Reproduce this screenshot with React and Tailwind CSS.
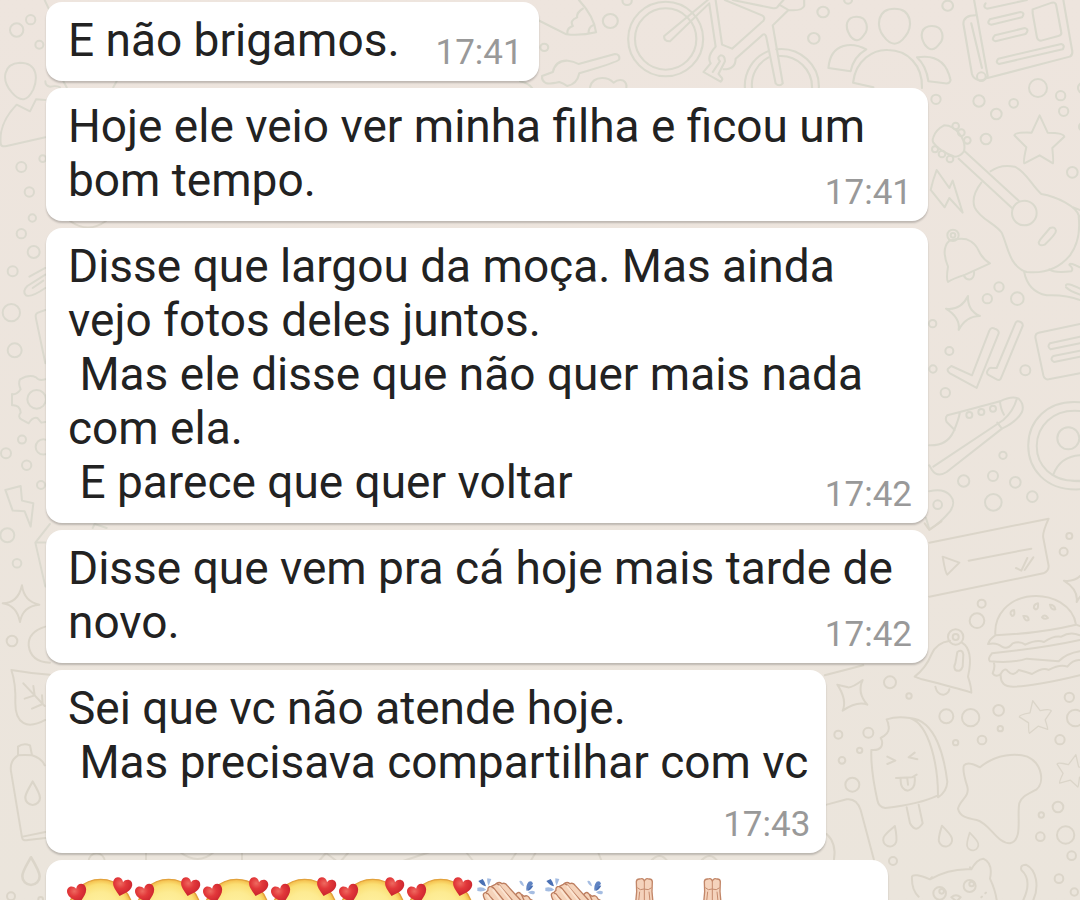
import clsx from "clsx";

const messages = [
  { text: "E não brigamos.", time: "17:41", layout: "inline" },
  {
    text: "Hoje ele veio ver minha filha e ficou um bom tempo.",
    time: "17:41",
    layout: "wide",
  },
  {
    text: "Disse que largou da moça. Mas ainda vejo fotos deles juntos.\n Mas ele disse que não quer mais nada com ela.\n E parece que quer voltar",
    time: "17:42",
    layout: "wide",
  },
  {
    text: "Disse que vem pra cá hoje mais tarde de novo.",
    time: "17:42",
    layout: "wide",
  },
  {
    text: "Sei que vc não atende hoje.\n Mas precisava compartilhar com vc",
    time: "17:43",
    layout: "stacked",
  },
];

const reactions = [
  "love",
  "love",
  "love",
  "love",
  "love",
  "love",
  "clap",
  "clap",
  "pray",
  "pray",
];

const STAR =
  "M0 -72 L24 -20 Q72 -20 74 -8 L38 26 Q42 70 40 72 L0 48 L-46 72 Q-50 68 -40 24 L-76 -12 Q-74 -22 -24 -20Z";
const SPARK = "M14 -52 Q12 -8 50 8 Q8 8 -14 50 Q-8 14 -52 -14 Q-8 -8 14 -52Z";
const DROP = "M0 -34 C12 -14 20 0 20 10 A20 20 0 0 1 -20 10 C-20 -2 -10 -16 0 -34Z";

function Dots({ points }) {
  return points.map(([x, y, r]) => <circle key={`${x}-${y}`} cx={x} cy={y} r={r} />);
}

function Wallpaper() {
  return (
    <svg
      aria-hidden="true"
      viewBox="0 0 1080 900"
      preserveAspectRatio="xMidYMin slice"
      className="absolute inset-0 h-full w-full"
      fill="none"
      strokeWidth="6"
      strokeLinecap="round"
      strokeLinejoin="round"
    >
      {/* pencil, bicycle, people, newspaper */}
      <g transform="translate(520 0) scale(.357 .3333)" stroke="#dad9cd">
        <path d="M50 60 L130 103 Q170 108 213 97 Q208 50 165 0 M176 26 Q158 38 160 52 Q138 62 148 78 Q130 84 133 103 M192 98 Q192 82 204 76" />
        <ellipse cx="408" cy="117" rx="105" ry="112" />
        <ellipse cx="408" cy="117" rx="86" ry="92" />
        <path d="M526 0 L404 108 Q402 124 420 124 L530 10 L548 140 Q522 170 534 190 Q520 208 514 216 L562 245 Q570 238 564 232 L556 222 L574 184 Q574 166 562 166 Q550 172 560 184 L540 216 M570 208 Q604 208 604 176 L680 104 Q688 100 690 112 L716 250 Q726 262 736 250 L708 76 L752 30 Q790 34 796 18 V0 M548 0 L566 134 L594 146 L682 62 Q688 52 678 46 L574 0 M596 0 L706 24 Q720 28 726 14 L738 0 M726 14 L752 30" />
        <path d="M630 265 A106 112 0 0 1 694 154 M718 148 A106 112 0 0 1 837 265 M650 265 A88 94 0 0 1 696 172 M724 168 A88 94 0 0 1 818 265" />
        <path d="M164 192 L266 162 Q280 162 278 178 Q276 186 166 220 Q160 252 132 258 Q122 250 110 246 Q84 252 74 250 Q60 244 62 228 L92 216 Q100 180 134 182 Q150 184 164 192Z M196 262 Q202 234 230 234 Q250 234 262 248 Q276 236 290 242 Q300 250 298 262 M0 244 Q24 250 34 264" />
        <path d="M1049 26 C1100 26 1100 84 1080 108 Q1049 154 1018 108 C998 84 998 26 1049 26Z M943 50 C976 50 976 90 964 104 Q944 136 924 106 C908 78 914 50 943 50Z M1154 78 C1188 78 1188 116 1176 130 Q1154 164 1134 134 C1118 106 1124 78 1154 78Z" />
        <path d="M933 248 C940 180 990 148 1030 150 C1086 150 1128 196 1126 264 M933 248 L990 262 M926 214 L864 204 Q868 150 906 138 Q936 128 970 148 Q934 170 926 214Z M1112 172 Q1190 158 1206 240 Q1204 252 1190 250 L1144 244 Q1138 198 1112 172Z" />
        <path d="M1272 0 L1310 228 Q1302 244 1284 240 Q1270 236 1266 222 L1242 72 Q1242 46 1276 46 M1264 70 L1294 204 M1310 234 L1540 170 Q1550 164 1546 148 L1522 0 M1436 28 L1490 8 Q1500 6 1502 16 L1516 96 Q1518 106 1508 108 L1460 122 Q1450 122 1448 112 L1436 40Z" />
        <path d="M1304 10 Q1296 22 1308 26 L1420 0 M1316 58 L1402 36 Q1416 38 1406 52 L1320 74 Q1306 72 1316 58Z M1330 106 L1414 84 Q1428 88 1416 102 L1332 124 Q1318 120 1330 106Z M1340 176 L1516 132 Q1528 136 1520 148 L1342 192 Q1330 188 1340 176Z" />
        <Dots points={[[253, 63, 21], [68, 142, 11], [300, 2, 13], [849, 36, 16], [823, 115, 16], [919, 0, 11], [1198, 17, 15]]} />
      </g>

      {/* guitar, bolt, bell */}
      <g transform="translate(900 80) scale(.3333)" stroke="#dad9cd">
        <path d="M100 172 Q106 150 132 136 Q160 136 180 164 Q198 188 192 214 Q180 230 164 230 Q118 214 100 188 Q96 180 100 172Z M194 214 L356 362 M176 236 L336 384 M272 274 Q300 252 344 260 C380 276 394 316 424 342 C470 350 530 378 538 410 M244 308 Q212 350 224 382 C240 418 290 432 306 460 C324 500 328 560 380 576 C440 582 480 562 510 526 Q544 480 536 410 M372 574 Q384 636 440 646 Q500 644 540 660 M448 568 Q460 580 514 574 Q522 566 508 554 Q510 546 540 562 M520 382 L540 390 M498 616 Q500 606 540 626 M498 622 Q510 634 540 644" />
        <circle cx="373" cy="399" r="37" />
        <path d="M420 480 L450 444 Q464 438 468 452 Q468 462 434 494 Q418 500 416 488Z" />
        <Dots points={[[167, 138, 10], [184, 158, 10], [202, 181, 10], [105, 208, 9], [126, 222, 10], [150, 237, 10], [159, 466, 17], [159, 466, 7]]} />
        <path d="M110 270 L148 324 L158 302 L188 398 L148 354 L134 382 L92 330 Q98 302 110 270Z" />
        <path d="M148 482 Q176 474 200 478 Q226 488 236 512 Q248 538 270 550 L196 584 Q158 596 144 606 Q138 598 144 560 Q122 506 148 482 M192 588 Q198 600 212 598 Q224 592 222 574" />
        <path transform="translate(419 178)" d={STAR} />
        <path transform="translate(190 700)" d={SPARK} />
        <Dots points={[[108, 58, 14], [237, 63, 17], [289, 102, 16], [341, 70, 13], [414, 24, 27], [482, 47, 14], [491, 94, 14], [550, 24, 16], [258, 177, 16], [517, 277, 16], [297, 621, 14], [262, 656, 14], [352, 656, 19], [549, 140, 12], [244, -10, 13]]} />
      </g>

      {/* ticks, card, shoe, contact */}
      <g transform="translate(900 300) scale(.3333)" stroke="#dad8cd">
        <path d="M154 198 L216 226 L268 92 Q274 80 284 86 Q298 90 296 100 L230 264 L150 220 Q140 214 144 206Z M290 204 L346 70 Q350 60 362 66 Q370 70 368 78 L304 232 Q300 244 290 238 L264 224 Q258 218 264 210 Q268 202 276 204Z" />
        <path d="M540 72 L416 98 Q406 100 406 112 L430 226 Q434 240 446 238 L540 220 M540 110 L450 130 Q440 140 452 148 L540 130 M540 152 L460 168 Q448 178 462 186 L540 170" />
        <path d="M88 436 Q140 438 160 396 Q176 360 180 336 L142 346 Q134 354 140 366 L164 390 M180 336 L300 304 Q336 286 356 296 Q374 314 366 336 Q350 366 306 386 L140 516 Q112 534 96 510 L88 496 M100 500 L310 360 Q340 334 350 298 M300 304 Q302 328 312 344 M292 368 L306 386" />
        <path d="M540 307 C336 290 330 580 540 568 M540 333 C370 318 364 556 540 542 M460 524 Q480 470 540 466 M466 530 Q492 544 540 544" />
        <circle cx="505" cy="415" r="33" />
        <path d="M88 574 C146 560 176 600 150 634 Q120 670 88 688 L78 654" />
        <Dots points={[[208, 345, 9], [244, 336, 9], [279, 326, 9], [98, 71, 11], [148, 153, 12], [99, 207, 11], [136, 278, 14], [376, 211, 15], [309, 466, 11], [279, 528, 15], [191, 543, 17], [346, 547, 16], [397, 590, 16], [280, 607, 25], [113, 614, 13]]} />
      </g>

      {/* voice note, bell, burger */}
      <g transform="translate(900 520) scale(.3333)" stroke="#dbd5c9">
        <path d="M88 68 L446 -4 Q426 40 430 54 L446 138 Q446 154 430 160 L88 230 M128 110 L178 128 L142 164 Q136 160 128 110Z M206 122 L394 86 M348 144 L364 152 L382 114 M374 150 L400 112 M74 10 L88 30 L124 4" />
        <path d="M150 362 Q108 368 94 404 Q78 444 44 470 L66 478 Q170 504 214 518 Q214 500 204 470 Q222 390 186 368 M106 500 Q112 526 132 524 Q146 520 148 508 M172 396 Q188 386 190 404 L188 440 Q182 458 166 450 Q160 440 166 430Z" />
        <circle cx="167" cy="351" r="23" />
        <circle cx="167" cy="351" r="9" />
        <path d="M286 344 C282 280 330 240 380 230 C460 218 520 260 528 314 L540 318 M286 346 Q420 340 528 314 M286 346 Q270 356 264 372 Q290 366 306 380 Q322 390 338 370 Q360 362 376 374 Q410 358 432 366 Q460 346 484 350 Q510 334 540 346 M276 400 Q430 384 540 360 M276 400 Q262 416 270 424 Q340 430 380 416 L476 424 Q500 400 540 394 M282 430 Q286 440 278 460 Q288 474 302 462 Q314 440 324 454 Q340 472 356 450 Q380 456 396 462 Q430 440 446 450 Q480 432 502 440 Q520 418 540 420 M302 464 Q300 500 340 500 Q400 500 540 466" />
        <path d="M332 282 Q330 272 342 270 Q346 288 336 288Z M370 288 Q386 286 386 300 Q376 306 370 288Z M402 264 Q400 254 414 250 Q416 270 406 268Z M450 254 Q464 254 466 268 Q454 272 450 254Z M426 292 Q434 280 444 294 Q434 300 426 292Z" />
        <path transform="translate(544 196)" d={SPARK} />
        <Dots points={[[245, 251, 12], [231, 302, 22], [508, 48, 9], [491, 95, 12]]} />
      </g>

      {/* ice lolly, splash, cat */}
      <g transform="translate(810 660) scale(.3333)" stroke="#dbd5c9">
        <path d="M44 46 L160 16" />
        <path d="M82 74 L114 82 Q126 84 158 60 Q140 98 172 134 Q142 122 98 152 Q112 120 82 74Z" />
        <path d="M230 178 Q260 168 300 174 C360 194 384 320 384 406 Q330 432 226 444 Q206 442 202 420 Q182 330 184 270 Q206 272 214 260 Q220 246 212 234 Q240 220 236 200 Q236 190 230 178Z M300 174 C380 180 404 300 412 366 Q410 396 384 412 M290 442 L300 490 Q318 522 338 490 L326 434" />
        <path d="M232 290 L256 302 L232 312 M314 278 L296 292 L322 298 M258 354 L306 352 L320 344 M272 356 Q270 390 294 392 Q318 386 314 352 M292 356 L294 374" />
        <path d="M462 316 Q474 302 510 322 C560 280 620 280 652 290 C700 312 702 370 680 388 C660 400 634 408 628 430 C620 470 640 540 600 550 C560 550 540 490 500 480 C470 474 450 470 444 446 C450 420 480 410 472 380 Q456 330 462 316Z" />
        <path transform="translate(243 530) rotate(20)" d={DROP} />
        <path transform="translate(404 530) rotate(-14)" d={DROP} />
        <path transform="translate(486 546) rotate(-14) scale(.85)" d={DROP} />
        <path transform="translate(678 168) scale(.65) rotate(-12)" d={STAR} />
        <path transform="translate(788 330) scale(.65) rotate(12)" d={STAR} />
        <path d="M50 434 L110 418 Q140 414 152 450 L192 600 M50 522 Q80 550 72 598" />
        <path d="M326 710 Q304 690 306 650 Q310 638 360 658 Q420 624 484 628 Q500 598 520 596 Q550 610 540 656 Q556 690 560 720 M484 628 L480 622 M360 658 L366 652 M424 712 Q438 700 452 712 L440 724Z M514 712 L516 710 M526 700 L528 698" />
        <path d="M634 630 Q630 614 648 614 C680 630 688 680 670 720 M634 630 Q668 660 640 720" />
        <Dots points={[[389, 700, 19], [395, 694, 7], [479, 678, 18], [485, 672, 7], [240, 67, 18], [297, 108, 8], [409, 169, 21], [482, 173, 26], [566, 151, 16], [571, 206, 8], [516, 240, 13], [437, 248, 8], [85, 224, 12], [175, 218, 15], [149, 271, 8], [96, 301, 10], [127, 374, 21], [249, 603, 12], [778, 112, 14], [796, 174, 25], [750, 239, 14], [744, 441, 16], [694, 465, 8], [691, 530, 13], [767, 525, 26], [785, 587, 13], [747, 656, 13], [793, 696, 11]]} />
      </g>

      {/* left edge */}
      <g transform="scale(.3333)" stroke="#dbd9ce">
        <path d="M60 188 C116 188 112 240 100 268 Q74 322 36 278 C2 240 10 190 60 188Z M136 300 L108 298 L90 334 L50 314 Q-4 370 2 430 Q2 442 20 438 L136 412 M134 0 L146 26 M136 244 Q136 258 150 260 Q170 256 180 262 M340 262 L350 244 M200 262 L190 244" />
        <path d="M136 804 L88 830 M136 824 L82 858 Q66 874 78 886 Q92 894 136 864 M130 842 L98 864" />
        <Dots points={[[92, 59, 14], [50, 90, 20], [118, 134, 12], [64, 501, 15], [88, 576, 14], [97, 654, 11], [64, 701, 14], [101, 756, 18], [38, 814, 15], [128, 476, 10]]} />
        <g transform="translate(0 900)">
          <path d="M136 30 L114 38 Q104 42 108 56 L136 190 M136 238 Q116 244 108 232 Q88 222 60 238 Q54 250 62 268 Q50 286 36 282 V316 Q60 314 62 338 Q52 350 64 358 L86 370 Q98 350 112 354 L124 368 L136 366" />
          <path d="M16 570 L62 558 L66 602 L100 610 L92 680 L74 634 L38 632Z M150 672 L106 728 L136 860 M106 728 H136 M278 684 L284 672 L320 684" />
          <Dots points={[[34, 38, 26], [44, 151, 21], [110, 298, 28], [66, 419, 12], [18, 460, 15], [80, 496, 14], [123, 555, 12], [22, 706, 21], [51, 790, 13], [130, 441, 23]]} />
        </g>
      </g>
      <g transform="translate(0 600) scale(.3333)" stroke="#dbd5c9">
        <path d="M8 10 Q54 10 66 -44 Q72 4 118 14 Q68 18 60 66 Q50 16 8 10Z M136 80 Q84 96 86 136 Q92 186 150 188" />
        <path d="M34 210 Q90 220 150 224 M34 210 Q48 250 46 310 C46 370 80 390 136 360 M70 250 L134 318 M100 258 L104 286 L74 296 M126 286 L128 312 L96 326" />
        <path d="M54 466 V440 Q70 428 90 436 L96 466 M54 466 Q76 464 96 466 Q126 476 134 496 M54 466 Q26 484 34 520 L66 712 Q68 724 84 720 L136 714 M68 710 L136 696" />
        <path transform="translate(98 582) scale(1.1)" d={DROP} />
        <path transform="translate(93 816) scale(1.3)" d={DROP} />
        <Dots points={[[36, 123, 16], [33, 889, 12], [122, 898, 7], [290, 784, 24]]} />
      </g>

      {/* the slivers between the bubbles */}
      <g stroke="#dcd6cb" strokeWidth="2">
        <path d="M70 221 Q88 234 106 221 M180 852 Q198 866 214 852 M146 853 V862 M242 853 V862 M318 862 L326 853 L338 862 M340 862 L348 853 M400 862 L430 852 M466 852 L474 862 M516 853 L510 862 M530 862 L536 852 M598 852 L602 862 M650 862 Q660 850 668 862 M700 862 Q710 850 718 862" />
      </g>
    </svg>
  );
}

function LoveFace() {
  return (
    <svg
      role="img"
      aria-label="rosto sorrindo com corações"
      viewBox="0 0 204 204"
      className="h-[68px] w-[68px] shrink-0 overflow-visible"
    >
      <defs>
        <radialGradient id="face" cx=".5" cy=".5" r=".5">
          <stop offset="0" stopColor="#fff3a6" />
          <stop offset=".6" stopColor="#fdeb92" />
          <stop offset=".85" stopColor="#fbdf74" />
          <stop offset="1" stopColor="#f3bb48" />
        </radialGradient>
        <radialGradient id="heart" cx=".38" cy=".3" r=".75">
          <stop offset="0" stopColor="#ee6a60" />
          <stop offset=".4" stopColor="#e2383a" />
          <stop offset="1" stopColor="#c51f2b" />
        </radialGradient>
      </defs>
      <circle cx="98" cy="121" r="96" fill="url(#face)" stroke="#e2a23c" strokeWidth="4" />
      <path
        transform="translate(28 66) rotate(-16)"
        d="M0 30 C-12 18 -30 8 -29 -10 C-27 -28 -6 -28 0 -13 C6 -28 27 -28 29 -10 C30 8 12 18 0 30Z"
        fill="url(#heart)"
      />
      <path
        transform="translate(162 46) rotate(14)"
        d="M0 30 C-12 18 -30 8 -29 -10 C-27 -28 -6 -28 0 -13 C6 -28 27 -28 29 -10 C30 8 12 18 0 30Z"
        fill="url(#heart)"
      />
    </svg>
  );
}

function ClapHands() {
  return (
    <svg
      role="img"
      aria-label="palmas"
      viewBox="0 0 204 204"
      className="h-[68px] w-[68px] shrink-0 overflow-visible"
    >
      <path d="M7 30 L20 24 Q28 34 30 46 Q18 44 7 30Z M172 44 Q158 40 154 60 Q164 58 172 44Z" fill="#4a70b4" />
      <path d="M158 32 Q168 28 171 38 L152 60 Q148 44 158 32Z" fill="#5f83c2" />
      <path d="M34 22 L46 24 L38 44 Q32 34 34 22Z M4 50 Q20 46 31 56 Q20 64 4 60Z M130 30 Q140 26 144 46 Q132 42 130 30Z M156 64 Q166 56 177 62 L175 69 Q164 72 156 64Z" fill="#a5bde2" />
      <g fill="#f5d3ba" stroke="#bd7e60" strokeWidth="4" strokeLinejoin="round">
        <path d="M112 110 L116 76 Q126 58 134 68 L144 76 Q156 70 162 84 L176 92 V140 H112Z" />
        <path d="M48 134 L24 80 Q18 66 30 64 L36 58 Q34 46 46 46 L58 40 Q68 30 78 38 Q88 34 94 44 L138 92 L150 140Z" />
        <path d="M30 66 Q36 66 42 76 L72 110 M46 48 Q52 48 60 60 L98 106 M62 38 Q70 40 78 52 L116 96 M136 70 L146 92" fill="none" />
      </g>
      <path d="M34 74 L68 120 M52 58 L88 106 M70 46 L108 94" stroke="#fbe4d1" strokeWidth="6" strokeLinecap="round" />
    </svg>
  );
}

function PrayHands() {
  return (
    <svg
      role="img"
      aria-label="mãos juntas"
      viewBox="0 0 204 204"
      className="h-[68px] w-[68px] shrink-0 overflow-visible"
    >
      <g stroke="#c28668" strokeWidth="4" strokeLinejoin="round">
        <path
          d="M67 140 L74 62 L73 32 Q74 23 84 24 Q94 20 97 30 Q102 20 110 24 Q120 23 121 32 L120 62 L127 140Z"
          fill="#f5d3bc"
        />
        <path d="M97 30 V140 M76 50 Q84 60 96 54 Q110 60 119 50 M83 62 L79 100 M111 62 L115 100" fill="none" stroke="#c68b6d" strokeWidth="3" />
      </g>
    </svg>
  );
}

function Bubble({ layout, children }) {
  return (
    <li
      className={clsx(
        "flow-root max-w-full rounded-[16px] bg-white px-[22px] pt-[11px] pb-2 shadow-[0_2px_2px_rgba(0,0,0,0.2)]",
        (layout === "inline" || layout === "stacked") && "w-fit",
        layout === "wide" && "w-[882px]",
        layout === "emoji" && "w-[842px]",
      )}
    >
      {children}
    </li>
  );
}

function Message({ text, time, layout }) {
  const stacked = layout === "stacked";

  return (
    <Bubble layout={layout}>
      <p
        className={clsx(
          "whitespace-pre-wrap text-[46px] leading-[54px] text-[#222222]",
          stacked && "-mr-1",
        )}
      >
        {text}
        {/* floats to the end of the last line */}
        {!stacked && (
          <time className="float-right mt-5 -mr-1.5 ml-9 text-[35px] leading-[40px] text-[#999999]">
            {time}
          </time>
        )}
      </p>
      {stacked && (
        <time className="mt-4 -mr-1.5 block text-right text-[35px] leading-[40px] text-[#999999]">
          {time}
        </time>
      )}
    </Bubble>
  );
}

export default function App() {
  return (
    <main className="relative h-screen overflow-hidden bg-linear-to-b from-[#eee5de] to-[#ebe5dc] font-['Roboto',sans-serif]">
      <Wallpaper />
      <ul className="relative flex flex-col gap-[7px] pt-0.5 pr-6 pl-[46px]">
        {messages.map((message) => (
          <Message key={message.text} {...message} />
        ))}
        <Bubble layout="emoji">
          <div className="flex">
            {reactions.map((kind, i) => {
              if (kind === "love") return <LoveFace key={i} />;
              if (kind === "clap") return <ClapHands key={i} />;
              return <PrayHands key={i} />;
            })}
          </div>
        </Bubble>
      </ul>
    </main>
  );
}
